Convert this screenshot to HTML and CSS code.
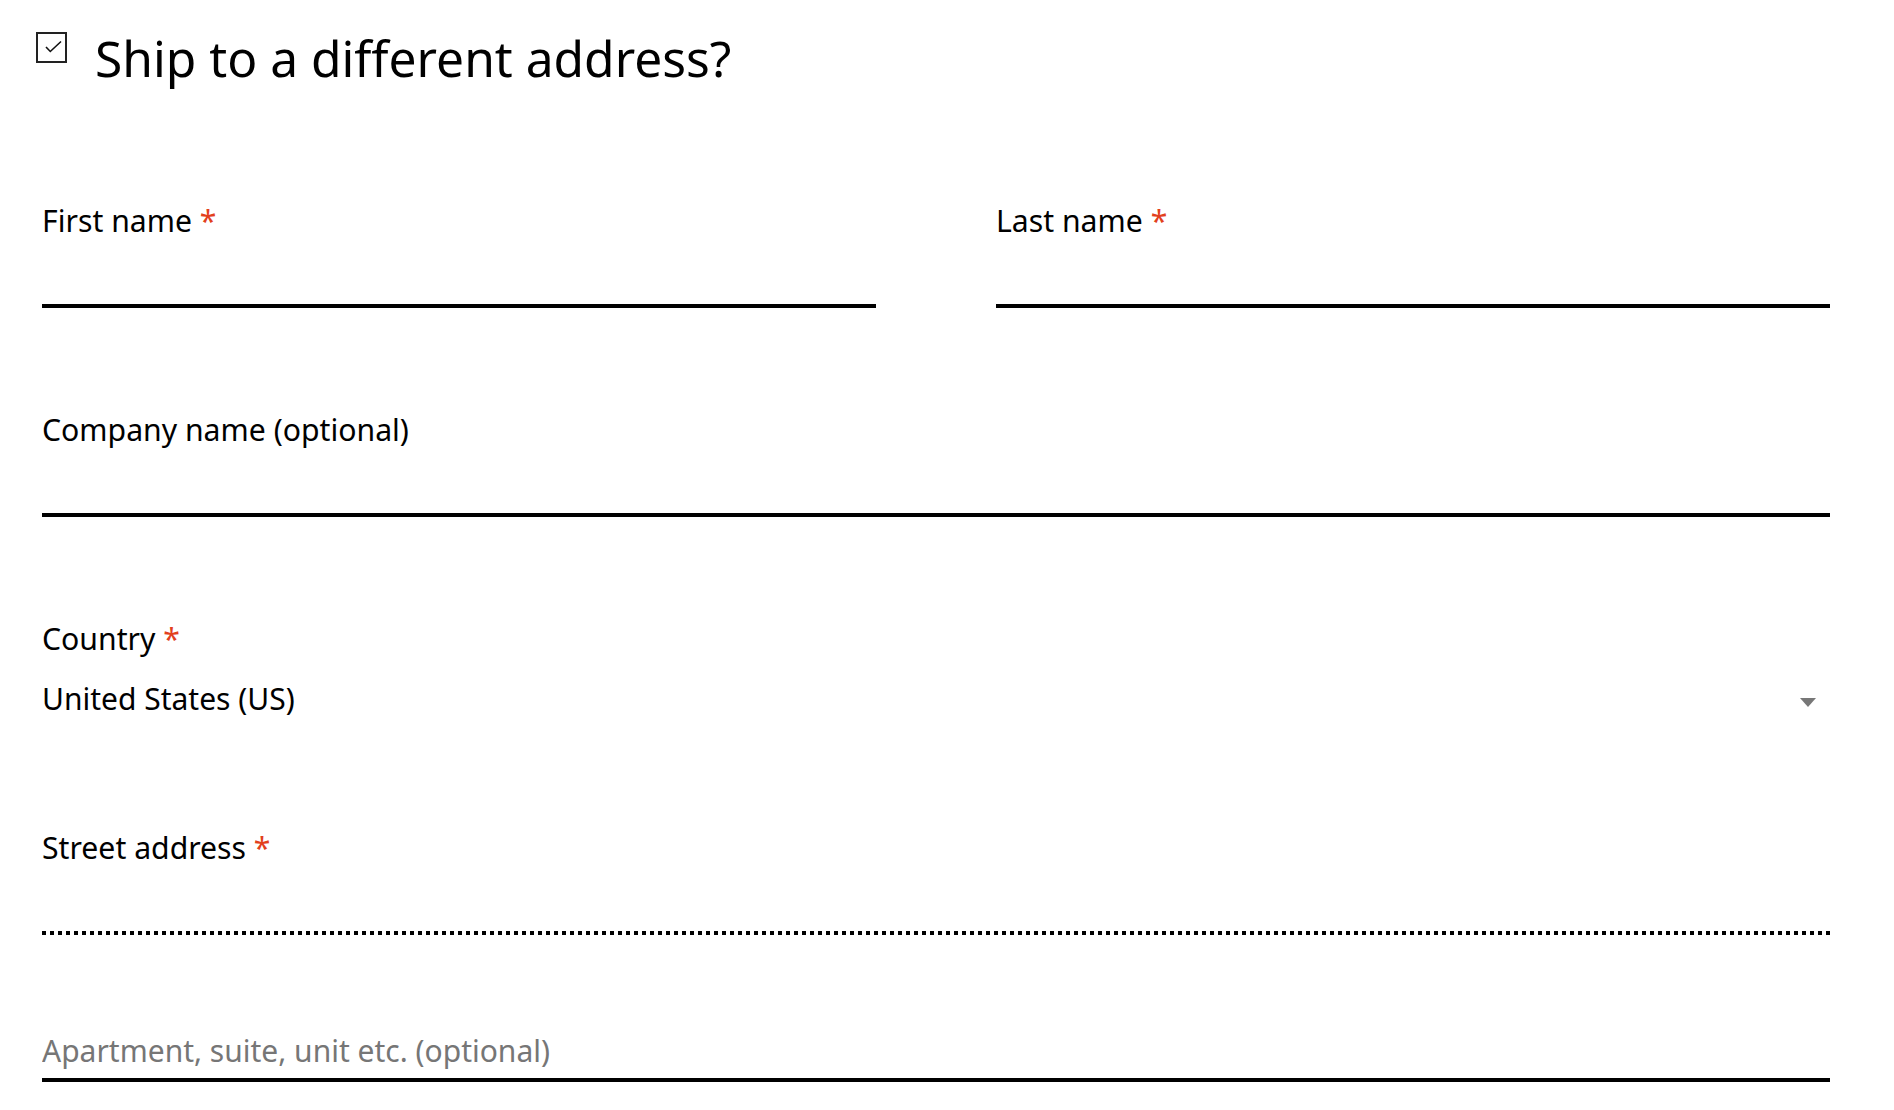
FILE: index.html
```html
<!DOCTYPE html>
<html lang="en">
<head>
<meta charset="utf-8">
<title>Ship to a different address</title>
<link rel="stylesheet" href="styles.css">
</head>
<body>
<div class="page">
  <div class="ship">
    <span class="ship-box">
      <svg class="ship-check" width="27" height="27" viewBox="0 0 27 27"><polyline points="8,13 12.3,17.5 23,7.5" fill="none" stroke="#111" stroke-width="1.6"/></svg>
    </span>
    <h3 class="ship-title">Ship to a different address?</h3>
  </div>

  <div class="row2">
    <div class="field">
      <label class="label">First name <span class="req">*</span></label>
      <input class="input" type="text">
    </div>
    <div class="field">
      <label class="label">Last name <span class="req">*</span></label>
      <input class="input" type="text">
    </div>
  </div>

  <div class="field">
    <label class="label">Company name (optional)</label>
    <input class="input" type="text">
  </div>

  <div class="field">
    <label class="label">Country <span class="req">*</span></label>
    <div class="select">
      <span class="select-value">United States (US)</span>
      <svg class="select-arrow" width="16" height="9" viewBox="0 0 16 9"><polygon points="0,0 16,0 8,9" fill="#777"/></svg>
    </div>
  </div>

  <div class="field field-street">
    <label class="label">Street address <span class="req">*</span></label>
    <input class="input input-dotted" type="text">
  </div>

  <div class="field field-last">
    <input class="input input-apt" type="text" placeholder="Apartment, suite, unit etc. (optional)">
  </div>
</div>
</body>
</html>
```

FILE: styles.css
```css
html, body {
  margin: 0;
  padding: 0;
  background: #fff;
}

body {
  font-family: "Noto Sans", "Open Sans", sans-serif;
  color: #000;
}

.page {
  padding: 28px 64px 0 42px;
}

.ship {
  display: flex;
  align-items: flex-start;
  gap: 28px;
  margin-left: -6px;
  margin-bottom: 112px;
}

.ship-box {
  width: 31px;
  height: 31px;
  box-sizing: border-box;
  border: 2px solid #222;
  margin-top: 4px;
  flex: none;
}

.ship-check {
  display: block;
}

.ship-title {
  margin: 0;
  font-size: 49.7px;
  font-weight: 400;
  line-height: 60px;
}

.row2 {
  display: grid;
  grid-template-columns: 1fr 1fr;
  column-gap: 120px;
}

.field {
  margin-bottom: 101px;
}

.field-street {
  margin-bottom: 90px;
}

.field-last {
  margin-bottom: 0;
}

.label {
  display: block;
  padding-top: 3px;
  font-size: 30.2px;
  line-height: 36px;
}

.req {
  color: #e2401c;
}

.input {
  display: block;
  width: 100%;
  box-sizing: border-box;
  margin: 0;
  border: 0;
  border-bottom: 4px solid #000;
  border-radius: 0;
  padding: 22px 0 7px;
  font-family: inherit;
  font-size: 30px;
  line-height: 36px;
  color: #000;
  background: transparent;
  outline: none;
}

.input-dotted {
  border-bottom-color: transparent;
  background: repeating-linear-gradient(90deg, #000 0 4px, transparent 4px 8px) left bottom / 100% 4px no-repeat;
  background-origin: border-box;
  background-clip: border-box;
}

.input-apt {
  padding: 8px 0 9px;
}

.input::placeholder {
  color: #767676;
  opacity: 1;
}

.select {
  display: flex;
  justify-content: space-between;
  align-items: flex-start;
  padding: 24px 14px 5px 0;
  border-bottom: 4px solid transparent;
  font-size: 30px;
  line-height: 36px;
}

.select-arrow {
  display: block;
  margin-top: 17px;
  flex: none;
}
```
